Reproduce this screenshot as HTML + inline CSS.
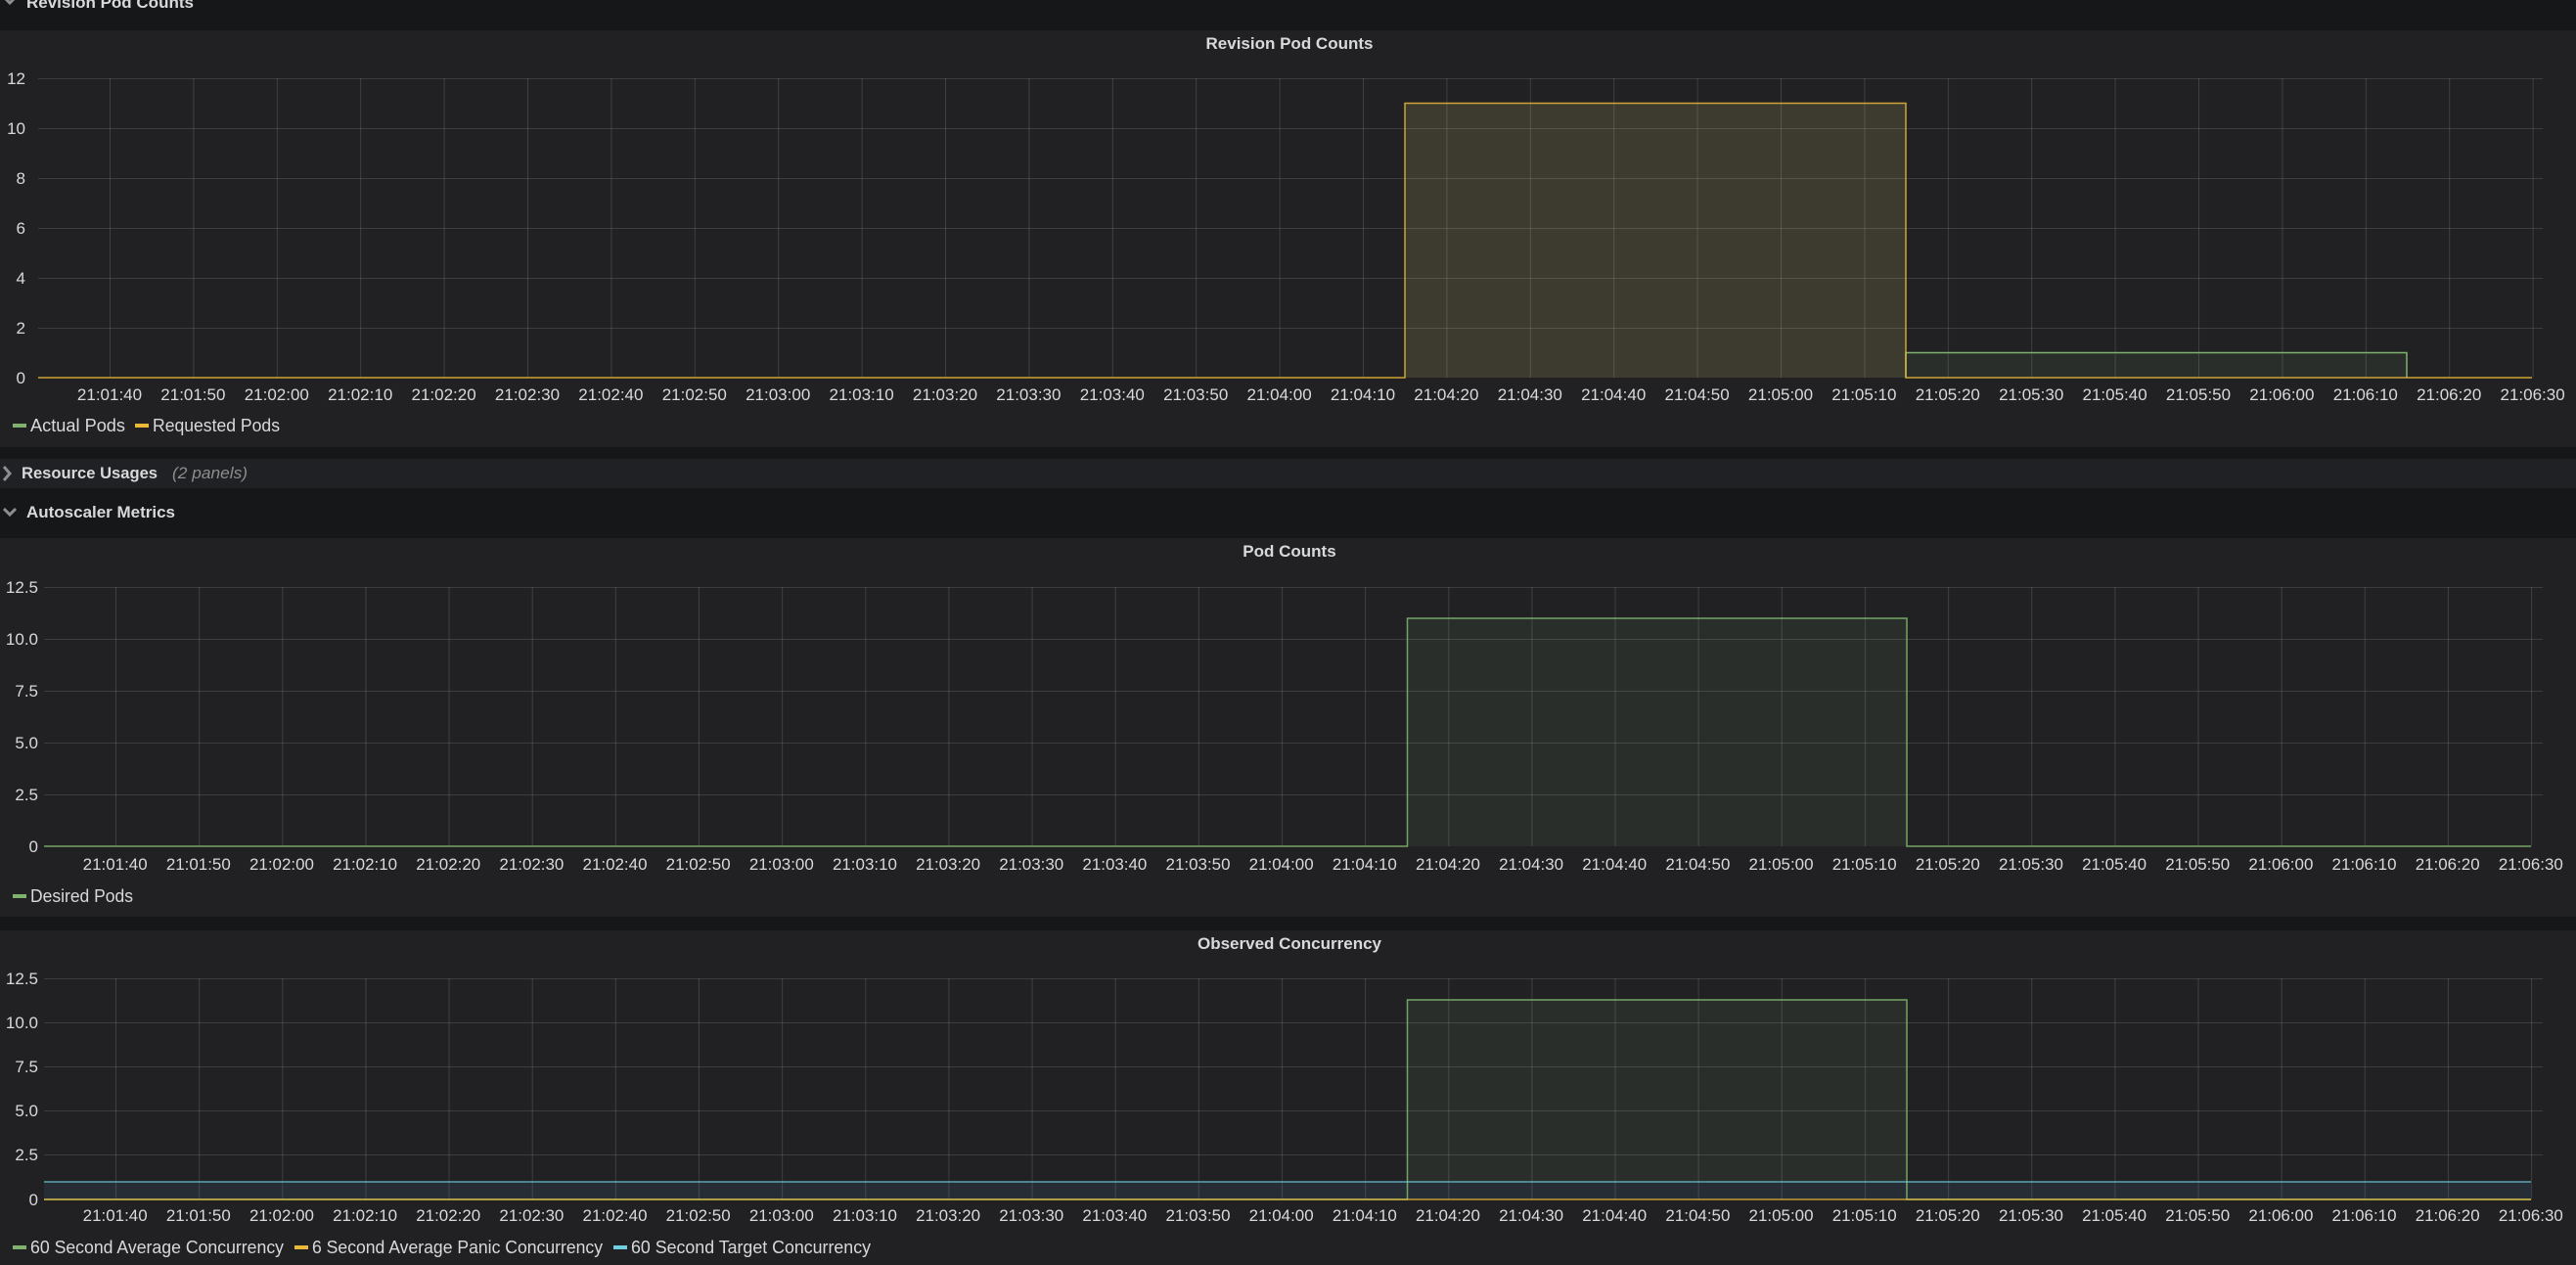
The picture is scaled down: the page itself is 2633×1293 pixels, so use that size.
<!DOCTYPE html>
<html><head><meta charset="utf-8"><style>
html,body{margin:0;padding:0;background:#161719;width:2633px;height:1293px;overflow:hidden}
svg{display:block;font-family:"Liberation Sans",sans-serif}
</style></head><body>
<svg width="2633" height="1293" viewBox="0 0 2633 1293" xmlns="http://www.w3.org/2000/svg">
<defs>
<pattern id="v1" x="112" y="0" width="85.4" height="10" patternUnits="userSpaceOnUse"><rect x="0" y="0" width="1" height="10" fill="#ffffff" fill-opacity="0.13"/></pattern>
<pattern id="v2" x="118" y="0" width="85.14" height="10" patternUnits="userSpaceOnUse"><rect x="0" y="0" width="1" height="10" fill="#ffffff" fill-opacity="0.13"/></pattern>
</defs>
<rect width="2633" height="1293" fill="#161719"/>
<path d="M3 -4 L10 3 L17 -4" stroke="#8e8e8e" stroke-width="3" fill="none"/>
<text x="27" y="8" font-size="17" font-weight="bold" fill="#d8d9da">Revision Pod Counts</text>

<!-- PANEL 1 -->
<rect x="0" y="31" width="2633" height="426" fill="#212124"/>
<text x="1318" y="50" font-size="17" font-weight="bold" fill="#d8d9da" text-anchor="middle">Revision Pod Counts</text>
<rect x="1436" y="105.5" width="512" height="280.5" fill="#3d3b30"/>
<rect x="1948" y="360.5" width="512" height="25.5" fill="#2a2e2b"/>
<rect x="39" y="80" width="2560" height="306" fill="url(#v1)"/>
<g stroke="#ffffff" stroke-opacity="0.13" stroke-width="1">
<line x1="39" x2="2599" y1="80.5" y2="80.5"/><line x1="39" x2="2599" y1="131.5" y2="131.5"/><line x1="39" x2="2599" y1="182.5" y2="182.5"/><line x1="39" x2="2599" y1="233.5" y2="233.5"/><line x1="39" x2="2599" y1="284.5" y2="284.5"/><line x1="39" x2="2599" y1="335.5" y2="335.5"/>
</g>
<polyline points="1948,386 1948,360.5 2460,360.5 2460,386" fill="none" stroke="#7eb26d" stroke-width="1.5"/>
<polyline points="39,386 1436,386 1436,105.5 1948,105.5 1948,386 2588,386" fill="none" stroke="#eab839" stroke-width="1.5" stroke-opacity="0.85"/>
<g font-size="17" fill="#d8d9da" text-anchor="end">
<text x="26" y="86">12</text><text x="26" y="137">10</text><text x="26" y="188">8</text><text x="26" y="239">6</text><text x="26" y="290">4</text><text x="26" y="341">2</text><text x="26" y="392">0</text>
</g>
<g font-size="17" fill="#d8d9da" text-anchor="middle" transform="translate(0,409)">
<text x="112">21:01:40</text><text x="197.4">21:01:50</text><text x="282.8">21:02:00</text><text x="368.2">21:02:10</text><text x="453.6">21:02:20</text><text x="539">21:02:30</text><text x="624.4">21:02:40</text><text x="709.8">21:02:50</text><text x="795.2">21:03:00</text><text x="880.6">21:03:10</text><text x="966">21:03:20</text><text x="1051.4">21:03:30</text><text x="1136.8">21:03:40</text><text x="1222.2">21:03:50</text><text x="1307.6">21:04:00</text><text x="1393">21:04:10</text><text x="1478.4">21:04:20</text><text x="1563.8">21:04:30</text><text x="1649.2">21:04:40</text><text x="1734.6">21:04:50</text><text x="1820">21:05:00</text><text x="1905.4">21:05:10</text><text x="1990.8">21:05:20</text><text x="2076.2">21:05:30</text><text x="2161.6">21:05:40</text><text x="2247">21:05:50</text><text x="2332.4">21:06:00</text><text x="2417.8">21:06:10</text><text x="2503.2">21:06:20</text><text x="2588.6">21:06:30</text>
</g>
<rect x="13" y="433" width="14" height="4" fill="#7eb26d"/>
<text x="31" y="441" font-size="18" fill="#d8d9da" textLength="97" lengthAdjust="spacingAndGlyphs">Actual Pods</text>
<rect x="138" y="433" width="14" height="4" fill="#eab839"/>
<text x="156" y="441" font-size="18" fill="#d8d9da" textLength="130" lengthAdjust="spacingAndGlyphs">Requested Pods</text>

<rect x="0" y="469" width="2633" height="30" fill="#202124"/>
<path d="M4 477 L10 484 L4 491" stroke="#8e8e8e" stroke-width="3" fill="none"/>
<text x="22" y="489" font-size="17" font-weight="bold" fill="#d8d9da" textLength="139" lengthAdjust="spacingAndGlyphs">Resource Usages</text>
<text x="176" y="489" font-size="17" font-style="italic" fill="#8e8e8e" textLength="77" lengthAdjust="spacingAndGlyphs">(2 panels)</text>
<path d="M4 520 L10 526 L16 520" stroke="#8e8e8e" stroke-width="3" fill="none"/>
<text x="27" y="529" font-size="17" font-weight="bold" fill="#d8d9da" textLength="152" lengthAdjust="spacingAndGlyphs">Autoscaler Metrics</text>

<!-- PANEL 2 -->
<rect x="0" y="550" width="2633" height="387" fill="#212124"/>
<text x="1318" y="569" font-size="17" font-weight="bold" fill="#d8d9da" text-anchor="middle">Pod Counts</text>
<rect x="1438.5" y="632" width="510.5" height="233" fill="#2a2e2b"/>
<rect x="45" y="600" width="2554" height="265" fill="url(#v2)"/>
<g stroke="#ffffff" stroke-opacity="0.13">
<line x1="45" x2="2599" y1="600.5" y2="600.5"/><line x1="45" x2="2599" y1="653.5" y2="653.5"/><line x1="45" x2="2599" y1="706.5" y2="706.5"/><line x1="45" x2="2599" y1="759.5" y2="759.5"/><line x1="45" x2="2599" y1="812.5" y2="812.5"/>
</g>
<polyline points="45,865 1438.5,865 1438.5,632 1949,632 1949,865 2587,865" fill="none" stroke="#7eb26d" stroke-width="1.5" stroke-opacity="0.9"/>
<g font-size="17" fill="#d8d9da" text-anchor="end">
<text x="39" y="606">12.5</text><text x="39" y="659">10.0</text><text x="39" y="712">7.5</text><text x="39" y="765">5.0</text><text x="39" y="818">2.5</text><text x="39" y="871">0</text>
</g>
<g font-size="17" fill="#d8d9da" text-anchor="middle" transform="translate(6,889) scale(0.997,1)">
<text x="112">21:01:40</text><text x="197.4">21:01:50</text><text x="282.8">21:02:00</text><text x="368.2">21:02:10</text><text x="453.6">21:02:20</text><text x="539">21:02:30</text><text x="624.4">21:02:40</text><text x="709.8">21:02:50</text><text x="795.2">21:03:00</text><text x="880.6">21:03:10</text><text x="966">21:03:20</text><text x="1051.4">21:03:30</text><text x="1136.8">21:03:40</text><text x="1222.2">21:03:50</text><text x="1307.6">21:04:00</text><text x="1393">21:04:10</text><text x="1478.4">21:04:20</text><text x="1563.8">21:04:30</text><text x="1649.2">21:04:40</text><text x="1734.6">21:04:50</text><text x="1820">21:05:00</text><text x="1905.4">21:05:10</text><text x="1990.8">21:05:20</text><text x="2076.2">21:05:30</text><text x="2161.6">21:05:40</text><text x="2247">21:05:50</text><text x="2332.4">21:06:00</text><text x="2417.8">21:06:10</text><text x="2503.2">21:06:20</text><text x="2588.6">21:06:30</text>
</g>
<rect x="13" y="914" width="14" height="4" fill="#7eb26d"/>
<text x="31" y="922" font-size="18" fill="#d8d9da" textLength="105" lengthAdjust="spacingAndGlyphs">Desired Pods</text>

<!-- PANEL 3 -->
<rect x="0" y="951" width="2633" height="342" fill="#212124"/>
<text x="1318" y="970" font-size="17" font-weight="bold" fill="#d8d9da" text-anchor="middle">Observed Concurrency</text>
<rect x="45" y="1208" width="2542" height="18" fill="#262d35"/>
<rect x="1438.5" y="1022" width="510.5" height="186" fill="#2a2e2b"/>
<rect x="45" y="1000" width="2554" height="226" fill="url(#v2)"/>
<g stroke="#ffffff" stroke-opacity="0.13">
<line x1="45" x2="2599" y1="1000.5" y2="1000.5"/><line x1="45" x2="2599" y1="1045.5" y2="1045.5"/><line x1="45" x2="2599" y1="1090.5" y2="1090.5"/><line x1="45" x2="2599" y1="1135.5" y2="1135.5"/><line x1="45" x2="2599" y1="1180.5" y2="1180.5"/>
</g>
<polyline points="45,1226 1438.5,1226 1438.5,1022 1949,1022 1949,1226 2587,1226" fill="none" stroke="#7eb26d" stroke-width="1.5" stroke-opacity="0.9"/>
<line x1="45" x2="2587" y1="1208" y2="1208" stroke="#6ed0e0" stroke-width="1.5" stroke-opacity="0.75"/>
<line x1="45" x2="2587" y1="1226" y2="1226" stroke="#eab839" stroke-width="1.5" stroke-opacity="0.8"/>
<g font-size="17" fill="#d8d9da" text-anchor="end">
<text x="39" y="1006">12.5</text><text x="39" y="1051">10.0</text><text x="39" y="1096">7.5</text><text x="39" y="1141">5.0</text><text x="39" y="1186">2.5</text><text x="39" y="1232">0</text>
</g>
<g font-size="17" fill="#d8d9da" text-anchor="middle" transform="translate(6,1248) scale(0.997,1)">
<text x="112">21:01:40</text><text x="197.4">21:01:50</text><text x="282.8">21:02:00</text><text x="368.2">21:02:10</text><text x="453.6">21:02:20</text><text x="539">21:02:30</text><text x="624.4">21:02:40</text><text x="709.8">21:02:50</text><text x="795.2">21:03:00</text><text x="880.6">21:03:10</text><text x="966">21:03:20</text><text x="1051.4">21:03:30</text><text x="1136.8">21:03:40</text><text x="1222.2">21:03:50</text><text x="1307.6">21:04:00</text><text x="1393">21:04:10</text><text x="1478.4">21:04:20</text><text x="1563.8">21:04:30</text><text x="1649.2">21:04:40</text><text x="1734.6">21:04:50</text><text x="1820">21:05:00</text><text x="1905.4">21:05:10</text><text x="1990.8">21:05:20</text><text x="2076.2">21:05:30</text><text x="2161.6">21:05:40</text><text x="2247">21:05:50</text><text x="2332.4">21:06:00</text><text x="2417.8">21:06:10</text><text x="2503.2">21:06:20</text><text x="2588.6">21:06:30</text>
</g>
<rect x="13" y="1273" width="14" height="4" fill="#7eb26d"/>
<text x="31" y="1281" font-size="18" fill="#d8d9da" textLength="259" lengthAdjust="spacingAndGlyphs">60 Second Average Concurrency</text>
<rect x="301" y="1273" width="14" height="4" fill="#eab839"/>
<text x="319" y="1281" font-size="18" fill="#d8d9da" textLength="297" lengthAdjust="spacingAndGlyphs">6 Second Average Panic Concurrency</text>
<rect x="627" y="1273" width="14" height="4" fill="#6ed0e0"/>
<text x="645" y="1281" font-size="18" fill="#d8d9da" textLength="245" lengthAdjust="spacingAndGlyphs">60 Second Target Concurrency</text>
</svg>
</body></html>
